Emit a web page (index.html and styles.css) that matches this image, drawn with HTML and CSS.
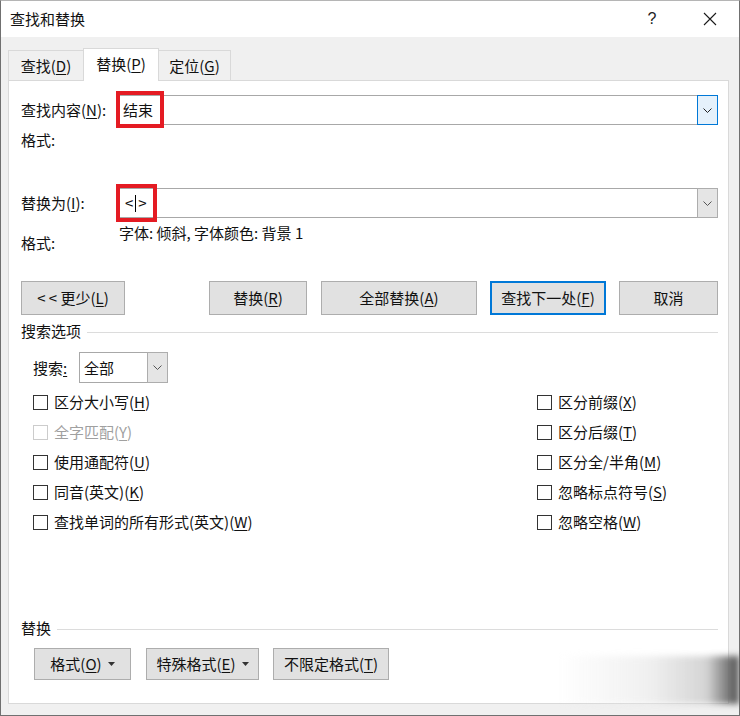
FILE: index.html
```html
<!DOCTYPE html>
<html lang="zh-CN">
<head>
<meta charset="utf-8">
<title>查找和替换</title>
<link rel="stylesheet" href="styles.css">
</head>
<body>
<div class="dialog">
  <div class="titlebar">
    <div class="title">查找和替换</div>
    <div class="help">?</div>
    <div class="close">
      <svg width="14" height="14" viewBox="0 0 14 14"><path d="M1 1 L13 13 M13 1 L1 13" stroke="#1a1a1a" stroke-width="1.1" fill="none"/></svg>
    </div>
  </div>
  <div class="body">
    <div class="tabs">
      <div class="tab tab-a">查找(<u>D</u>)</div>
      <div class="tab tab-b selected">替换(<u>P</u>)</div>
      <div class="tab tab-c">定位(<u>G</u>)</div>
    </div>
    <div class="panel">
      <div class="field-row find-row">
        <div class="label">查找内容(<u>N</u>):</div>
        <div class="combo">
          <div class="combo-text">结束</div>
          <div class="combo-arrow focused">
            <svg width="9" height="5" viewBox="0 0 9 5"><polyline points="0.5,0.5 4.5,4.5 8.5,0.5" stroke="#222" stroke-width="1" fill="none"/></svg>
          </div>
          <div class="mark mark-find"></div>
        </div>
      </div>
      <div class="format-row1">
        <div class="label">格式:</div>
      </div>
      <div class="field-row replace-row">
        <div class="label">替换为(<u>I</u>):</div>
        <div class="combo">
          <div class="combo-text replace-text">&lt;<span class="caret"></span>&gt;</div>
          <div class="combo-arrow">
            <svg width="9" height="5" viewBox="0 0 9 5"><polyline points="0.5,0.5 4.5,4.5 8.5,0.5" stroke="#555" stroke-width="1" fill="none"/></svg>
          </div>
          <div class="mark mark-replace"></div>
        </div>
      </div>
      <div class="format-row2">
        <div class="label fmt-label">格式:</div>
        <div class="fmt-desc">字体: 倾斜, 字体颜色: 背景 1</div>
      </div>
      <div class="button-row">
        <div class="btn btn-less">&lt; &lt; 更少(<u>L</u>)</div>
        <div class="spacer"></div>
        <div class="btn btn-replace">替换(<u>R</u>)</div>
        <div class="btn btn-all">全部替换(<u>A</u>)</div>
        <div class="btn btn-next default">查找下一处(<u>F</u>)</div>
        <div class="btn btn-cancel">取消</div>
      </div>
      <div class="section">
        <span class="section-title">搜索选项</span>
        <span class="section-line"></span>
      </div>
      <div class="search-row">
        <div class="search-label">搜索<u>:</u></div>
        <div class="select">
          <div class="select-text">全部</div>
          <div class="select-arrow">
            <svg width="9" height="5" viewBox="0 0 9 5"><polyline points="0.5,0.5 4.5,4.5 8.5,0.5" stroke="#555" stroke-width="1" fill="none"/></svg>
          </div>
        </div>
      </div>
      <div class="options">
        <div class="opt"><span class="box"></span><span>区分大小写(<u>H</u>)</span></div>
        <div class="opt"><span class="box"></span><span>区分前缀(<u>X</u>)</span></div>
        <div class="opt disabled"><span class="box"></span><span>全字匹配(<u>Y</u>)</span></div>
        <div class="opt"><span class="box"></span><span>区分后缀(<u>T</u>)</span></div>
        <div class="opt"><span class="box"></span><span>使用通配符(<u>U</u>)</span></div>
        <div class="opt"><span class="box"></span><span>区分全/半角(<u>M</u>)</span></div>
        <div class="opt"><span class="box"></span><span>同音(英文)(<u>K</u>)</span></div>
        <div class="opt"><span class="box"></span><span>忽略标点符号(<u>S</u>)</span></div>
        <div class="opt"><span class="box"></span><span>查找单词的所有形式(英文)(<u>W</u>)</span></div>
        <div class="opt"><span class="box"></span><span>忽略空格(<u>W</u>)</span></div>
      </div>
      <div class="bottom">
        <div class="section">
          <span class="section-title">替换</span>
          <span class="section-line"></span>
        </div>
        <div class="bottom-buttons">
          <div class="btn btn-fmt">格式(<u>O</u>)<svg class="tri" width="7" height="4" viewBox="0 0 7 4"><polygon points="0,0 7,0 3.5,4" fill="#333"/></svg></div>
          <div class="btn btn-special">特殊格式(<u>E</u>)<svg class="tri" width="7" height="4" viewBox="0 0 7 4"><polygon points="0,0 7,0 3.5,4" fill="#333"/></svg></div>
          <div class="btn btn-nolimit">不限定格式(<u>T</u>)</div>
        </div>
      </div>
    </div>
  </div>
  <div class="watermark"></div>
</div>
</body>
</html>
```
FILE: styles.css
```css
* { box-sizing: border-box; }
html, body { margin: 0; padding: 0; }
body {
  width: 740px;
  height: 716px;
  overflow: hidden;
  font-family: "Noto Sans CJK SC", "Noto Sans", sans-serif;
  font-size: 15px;
  line-height: 20px;
  color: #111;
  background: #fff;
}
u { text-decoration: underline; text-underline-offset: 2px; text-decoration-thickness: 1px; }

.dialog {
  position: relative;
  width: 740px;
  height: 716px;
  border: 1px solid #707070;
  border-top-color: #b5b5b5;
  background: #f0f0f0;
  display: flex;
  flex-direction: column;
}

.titlebar {
  height: 36px;
  background: #fff;
  display: flex;
  align-items: center;
  padding-left: 9px;
  flex: none;
}
.title { flex: 1; padding-top: 0; }
.help {
  width: 20px;
  text-align: center;
  font-family: "Liberation Sans", sans-serif;
  font-size: 16px;
  color: #222;
  margin-right: 41px;
}
.close {
  width: 14px;
  height: 14px;
  display: flex;
  margin-right: 22px;
}

.body {
  flex: 1;
  padding: 11px 10px 0 7px;
  display: flex;
  flex-direction: column;
}

.tabs {
  display: flex;
  align-items: flex-end;
  height: 32px;
}
.tab {
  height: 30px;
  border: 1px solid #d9d9d9;
  border-bottom: none;
  background: #f0f0f0;
  display: flex;
  align-items: center;
  justify-content: center;
  margin-left: -1px;
}
.tab-a { width: 76px; margin-left: 0; }
.tab-b { width: 76px; }
.tab-c { width: 73px; }
.tab.selected {
  height: 33px;
  background: #fff;
  position: relative;
  z-index: 2;
  margin-bottom: -1px;
  padding-bottom: 2px;
}

.panel {
  width: 721px;
  height: 624px;
  background: #fff;
  border: 1px solid #d9d9d9;
  padding: 0 10px 23px 12px;
  display: flex;
  flex-direction: column;
}

.field-row {
  display: flex;
  align-items: center;
  height: 30px;
}
.find-row { margin-top: 14px; }
.replace-row { margin-top: 38px; }
.label { width: 95px; flex: none; }

.combo {
  position: relative;
  flex: 1;
  height: 30px;
  display: flex;
}
.combo-text {
  flex: 1;
  border: 1px solid #a8a8a8;
  border-right: none;
  padding-left: 6px;
  display: flex;
  align-items: center;
  background: #fff;
}
.replace-text { padding-left: 8px; }
.caret {
  display: inline-block;
  width: 1px;
  height: 17px;
  background: #000;
  margin: 0 2px;
}
.combo-arrow {
  width: 21px;
  border: 1px solid #adadad;
  background: #e5e5e5;
  display: flex;
  align-items: center;
  justify-content: center;
}
.combo-arrow.focused {
  border-color: #0078d7;
  background: #e5f1fb;
}
.mark {
  position: absolute;
  left: 0;
  top: -4px;
  border: 4px solid #e41b23;
}
.mark-find { width: 48px; height: 37px; }
.mark-replace { width: 41px; height: 38px; }

.format-row1 { margin-top: 5px; height: 20px; }
.format-row2 {
  margin-top: 5px;
  height: 30px;
  display: flex;
  align-items: flex-start;
}
.fmt-label { width: 98px; margin-top: 10px; }
.fmt-desc { height: 20px; }

.button-row {
  margin-top: 28px;
  height: 34px;
  display: flex;
  gap: 0;
}
.spacer { flex: 1; }
.btn {
  height: 34px;
  background: #e1e1e1;
  border: 1px solid #adadad;
  display: flex;
  align-items: center;
  justify-content: center;
}
.btn-less { width: 104px; }
.btn-replace { width: 98px; }
.btn-all { width: 156px; margin-left: 14px; }
.btn-next { width: 116px; margin-left: 13px; }
.btn-cancel { width: 99px; margin-left: 13px; }
.btn.default { border: 2px solid #0078d7; }

.section {
  display: flex;
  align-items: center;
  height: 20px;
  margin-top: 6px;
}
.section-title { flex: none; margin-right: 6px; }
.section-line { flex: 1; height: 1px; background: #dcdcdc; margin-top: 2px; }

.search-row {
  margin-top: 11px;
  height: 31px;
  display: flex;
  align-items: center;
  padding-left: 12px;
}
.search-label { width: 46px; }
.select {
  width: 89px;
  height: 31px;
  display: flex;
}
.select-text {
  flex: 1;
  border: 1px solid #a8a8a8;
  border-right: none;
  padding-left: 4px;
  display: flex;
  align-items: center;
}
.select-arrow {
  width: 21px;
  border: 1px solid #adadad;
  background: #e5e5e5;
  display: flex;
  align-items: center;
  justify-content: center;
}

.options {
  margin-top: 4px;
  display: grid;
  grid-template-columns: 504px 1fr;
  grid-auto-rows: 30px;
  padding-left: 12px;
}
.opt {
  display: flex;
  align-items: center;
}
.box {
  width: 15px;
  height: 15px;
  border: 1px solid #333;
  background: #fff;
  margin-right: 6px;
  flex: none;
}
.opt.disabled { color: #a0a0a0; }
.opt.disabled .box { border-color: #cccccc; }

.bottom { margin-top: auto; }
.bottom .section { margin-top: 0; }
.bottom-buttons {
  margin-top: 10px;
  height: 32px;
  display: flex;
  padding-left: 13px;
}
.bottom-buttons .btn { height: 32px; }
.btn-fmt { width: 97px; }
.btn-special { width: 113px; margin-left: 15px; }
.btn-nolimit { width: 116px; margin-left: 14px; }
.tri { margin-left: 6px; }

.watermark {
  position: absolute;
  right: 0;
  bottom: 11px;
  width: 180px;
  height: 48px;
  background: linear-gradient(to right, rgba(255,255,255,0), rgba(230,230,230,0.6) 50%, rgba(205,205,205,0.85) 82%, rgba(70,70,70,0.95));
  filter: blur(3px);
  pointer-events: none;
}
```
